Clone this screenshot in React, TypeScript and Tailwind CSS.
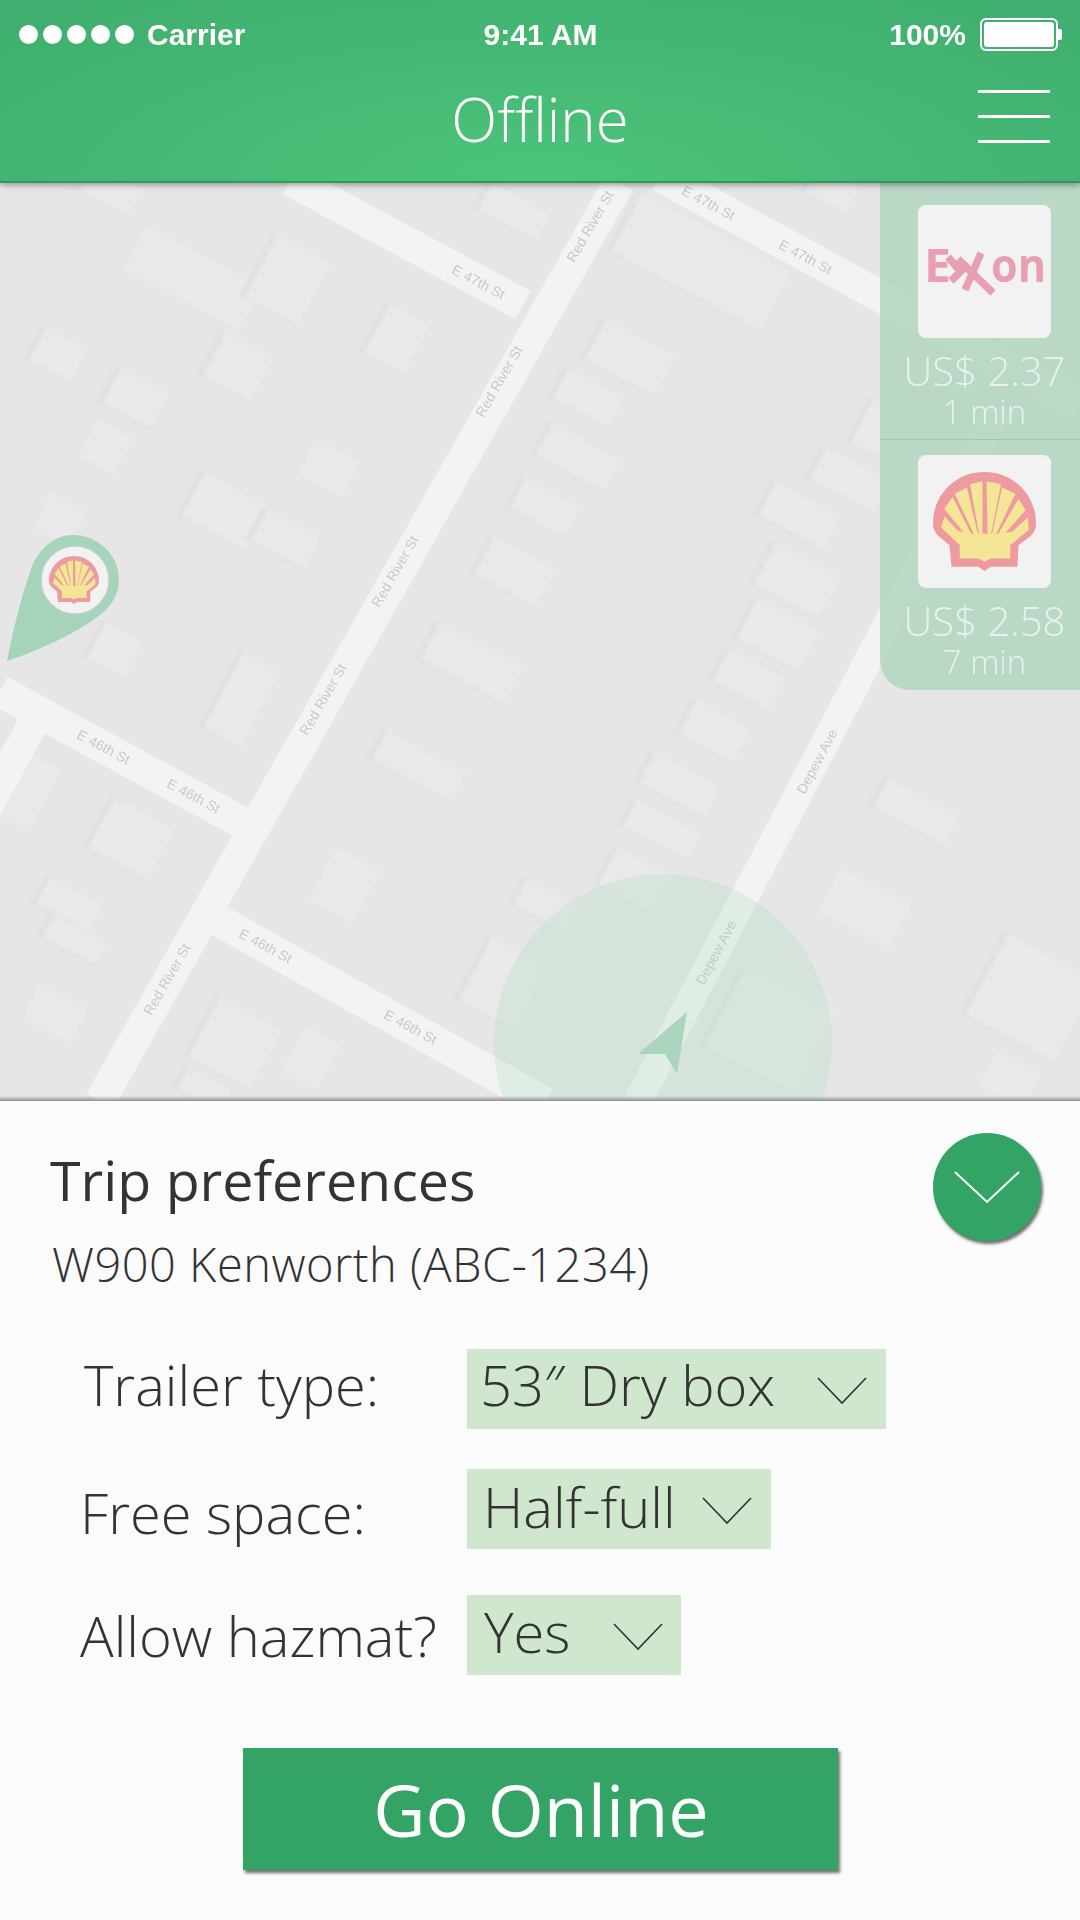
import React from 'react';

const sans = "font-['Open_Sans',sans-serif]";

// [cx, cy, w, h, hasEdge]
const buildings: [number, number, number, number, number][] = [
    [193, 278, 130, 49, 0], [288, 280, 60, 70, 1], [397, 339, 45, 55, 1], [238, 367, 54, 50, 1],
    [58, 355, 46, 37, 1], [136, 398, 54, 40, 1], [106, 447, 40, 42, 0], [329, 468, 50, 40, 0],
    [224, 511, 70, 50, 1], [60, 520, 40, 40, 0], [286, 539, 60, 35, 1], [110, 190, 55, 30, 1],
    [630, 358, 78, 45, 1], [588, 398, 62, 34, 1], [578, 458, 77, 35, 1], [545, 508, 62, 34, 1],
    [515, 572, 69, 43, 1], [701, 262, 168, 66, 1], [514, 212, 66, 30, 1], [832, 190, 45, 30, 1],
    [880, 430, 40, 50, 1], [850, 480, 72, 36, 1], [800, 516, 74, 38, 1], [797, 581, 73, 48, 1],
    [778, 635, 70, 45, 1], [472, 663, 94, 41, 1], [419, 766, 90, 32, 1], [345, 885, 50, 60, 0],
    [749, 680, 63, 36, 1], [715, 732, 62, 38, 1], [680, 785, 74, 35, 1], [662, 830, 72, 30, 1],
    [635, 880, 60, 42, 1], [545, 905, 55, 30, 1], [916, 812, 80, 33, 1], [865, 908, 80, 50, 0],
    [1031, 998, 100, 92, 1], [1010, 1080, 50, 40, 0], [770, 1030, 100, 90, 1], [242, 700, 42, 85, 1],
    [115, 650, 42, 40, 1], [131, 839, 67, 57, 1], [70, 905, 60, 30, 1], [75, 940, 60, 25, 1],
    [55, 1014, 55, 40, 0], [235, 1044, 70, 68, 1], [311, 1058, 40, 52, 0], [205, 1090, 50, 25, 1],
    [502, 983, 60, 70, 1], [25, 790, 45, 70, 0],
];

// [x, y, angle, text]
const labels: [number, number, number, string][] = [
    [478, 283, 28, 'E 47th St'], [708, 204, 28, 'E 47th St'], [805, 258, 28, 'E 47th St'],
    [591, 227, -60, 'Red River St'], [500, 382, -60, 'Red River St'], [396, 572, -60, 'Red River St'],
    [324, 700, -60, 'Red River St'], [168, 980, -60, 'Red River St'],
    [103, 748, 28, 'E 46th St'], [193, 797, 28, 'E 46th St'], [265, 947, 28, 'E 46th St'], [410, 1028, 28, 'E 46th St'],
    [818, 762, -62, 'Depew Ave'], [717, 953, -62, 'Depew Ave'],
];

const shellPetals = [
    '36,12 48,9 48,62 45,62', '52,9 66,12 56,62 53,62', '21,21 33,15 44,62 41,63', '67,15 80,21 60,63 57,62',
    '11,36 19,24 39,64 36,66', '83,26 90,37 64,66 61,64', '8,54 11,43 34,68 30,70', '92,44 93,56 70,70 66,68',
];

const ShellLogo = ({x, y, size}: { x: number; y: number; size: number }) => (
    <svg x={x} y={y} width={size} height={size * 0.96} viewBox="0 0 100 96" className="block">
        <path
            d="M50 0C78 0 100 22 100 50C100 55 98 59 95 62L83 71L82 92L56 92L50 96L44 92L18 92L16 71L5 62C2 59 0 55 0 50C0 22 22 0 50 0Z"
            fill="#ee9aa1"/>
        <path d="M8 54L26 71L26 84L44 84L50 87L56 84L75 84L75 71L93 56L62 60L38 60Z" fill="#f5e596"/>
        {shellPetals.map((points) => <polygon key={points} points={points} fill="#f5e596"/>)}
    </svg>
);

const ExxonLogo = () => (
    <svg width="133" height="133" viewBox="0 0 133 133" className="block">
        <g fill="#e89fb2" fontFamily="'Open Sans',sans-serif" fontWeight="700">
            <text x="6" y="76.5" fontSize="46" textLength="27" lengthAdjust="spacingAndGlyphs">E</text>
            <text x="73" y="76.5" fontSize="46" textLength="55" lengthAdjust="spacingAndGlyphs">on</text>
        </g>
        <g stroke="#e89fb2" strokeWidth="7.5" fill="none">
            <path d="M33 76L50 59"/>
            <path d="M47 85L63 48"/>
            <path d="M30 52L43 67"/>
            <path d="M40 54L75 88"/>
        </g>
    </svg>
);

const MapCanvas = () => (
    <svg width="1080" height="918" viewBox="0 183 1080 918" className="block absolute inset-0">
        <rect x="0" y="183" width="1080" height="918" fill="#e6e6e6"/>
        <g className="blur-[1px]">
            {buildings.map(([cx, cy, w, h, edge], i) => (
                <g key={i} transform={`rotate(28 ${cx} ${cy})`}>
                    <rect x={cx - w / 2} y={cy - h / 2} width={w} height={h} fill="#e9e9e9"/>
                    {edge ? <rect x={cx - w / 2 - 6} y={cy - h / 2} width={6} height={h} fill="#e1e1e1"/> : null}
                    {edge ? <rect x={cx - w / 2 - 6} y={cy + h / 2} width={w + 6} height={1.5} fill="#dedede"/> : null}
                </g>
            ))}
        </g>
        <g stroke="#f3f3f3" fill="none">
            <path d="M290 180L523 305" strokeWidth="32"/>
            <path d="M660 176L1080 405" strokeWidth="32"/>
            <path d="M0 691L250 827" strokeWidth="32"/>
            <path d="M200 910L545 1103" strokeWidth="32"/>
            <path d="M35 720L-25 830" strokeWidth="30"/>
            <path d="M619 183L100 1101" strokeWidth="31"/>
            <path d="M1000 408L638 1101" strokeWidth="28"/>
        </g>
        {labels.map(([x, y, angle, text], i) => (
            <text key={i} x={x} y={y} transform={`rotate(${angle} ${x} ${y})`} textAnchor="middle"
                  dominantBaseline="middle" fontSize="14" fill="#c8c8c8" fontFamily="'Liberation Sans',sans-serif">
                {text}
            </text>
        ))}
        <circle cx="663" cy="1043" r="169" fill="#a8dcb8" fillOpacity="0.25"/>
        <path d="M687 1012L638 1054L665 1054L677 1074Z" fill="#a9d4bd"/>
        <path
            d="M7 661C14 625 22 595 32 566C40 548 55 535 73 535C98 535 119 555 119 580C119 595 110 608 100 615C75 634 40 650 7 661Z"
            fill="#a5d4bb"/>
        <circle cx="75" cy="580" r="34" fill="#f2f2f2" stroke="#c4cfc9" strokeWidth="1.5"/>
        <ShellLogo x={49} y={556} size={50}/>
    </svg>
);

const StationCard = ({price, time, logo, last}: { price: string; time: string; logo: React.ReactNode; last?: boolean }) => (
    <div className={`flex flex-col items-center pl-[9px] ${last ? 'h-[250px] pt-[15px]' : 'h-[257px] pt-[22px] border-b border-[#a3c5b1]'}`}>
        <div className="w-[133px] h-[133px] bg-[#f2f2f2] rounded-[8px] flex items-center justify-center">{logo}</div>
        <div className={`${sans} font-light text-[40px] leading-[46px] mt-[10px] text-[#e8f2ec] whitespace-nowrap`}>{price}</div>
        <div className={`${sans} font-light text-[33px] leading-[36px] text-[#e8f2ec] whitespace-nowrap`}>{time}</div>
    </div>
);

const Chevron = ({w = 50, h = 26, stroke = '#333333', sw = 1.6}: { w?: number; h?: number; stroke?: string; sw?: number }) => (
    <svg width={w} height={h + 2} viewBox={`0 0 ${w} ${h + 2}`} className="block shrink-0">
        <path d={`M1 1L${w / 2} ${h}L${w - 1} 1`} fill="none" stroke={stroke} strokeWidth={sw}/>
    </svg>
);

const SelectRow = ({label, value, labelClass, boxClass, valueClass, rowClass}: {
    label: string; value: string; labelClass: string; boxClass: string; valueClass: string; rowClass: string;
}) => (
    <div className={`flex items-start ${rowClass}`}>
        <div className={`${sans} font-light text-[56px] leading-[80px] text-[#333] whitespace-nowrap ${labelClass}`}>{label}</div>
        <div className={`h-[80px] bg-[#cfe7cd] flex items-center ${boxClass}`}>
            <span className={`${sans} font-light text-[56px] leading-[80px] text-[#333] whitespace-nowrap ${valueClass}`}>{value}</span>
            <span className="mt-[4px]"><Chevron/></span>
        </div>
    </div>
);

export default function App() {
    return (
        <div className="w-[1080px] h-[1920px] overflow-hidden flex flex-col bg-[#fbfbfb]">
            <header
                className="relative z-10 h-[183px] shrink-0 border-b-2 border-[#2f9a5b] shadow-[0_2px_6px_rgba(0,0,0,0.35)] bg-[radial-gradient(ellipse_70%_130%_at_50%_100%,#4cc47a_0%,#3fae6e_100%)] text-white">
                <div className="h-[69px] pb-[1px] grid grid-cols-3 items-center pl-[19px] pr-[18px] font-['Liberation_Sans',sans-serif] font-bold text-[30px]">
                    <div className="flex items-center gap-[13px]">
                        <div className="flex gap-[5px]">
                            <span className="w-[19px] h-[19px] rounded-full bg-white"/>
                            <span className="w-[19px] h-[19px] rounded-full bg-white"/>
                            <span className="w-[19px] h-[19px] rounded-full bg-white"/>
                            <span className="w-[19px] h-[19px] rounded-full bg-white"/>
                            <span className="w-[19px] h-[19px] rounded-full bg-white"/>
                        </div>
                        <span>Carrier</span>
                    </div>
                    <div className="text-center">9:41 AM</div>
                    <div className="flex items-center justify-end gap-[14px]">
                        <span>100%</span>
                        <div className="flex items-center">
                            <div className="w-[78px] h-[33px] border-2 border-white rounded-[6px] p-[2px]">
                                <div className="w-full h-full bg-white rounded-[3px]"/>
                            </div>
                            <div className="w-[4px] h-[11px] bg-white rounded-r-[2px]"/>
                        </div>
                    </div>
                </div>
                <div className="relative flex items-center justify-center h-[81px]">
                    <span className={`${sans} font-light text-[60px] leading-[80px] mt-[18px]`}>Offline</span>
                    <div className="absolute right-[30px] top-[21px] flex flex-col gap-[22px]">
                        <span className="block w-[72px] h-[3px] bg-white"/>
                        <span className="block w-[72px] h-[3px] bg-white"/>
                        <span className="block w-[72px] h-[3px] bg-white"/>
                    </div>
                </div>
            </header>

            <main className="relative h-[918px] shrink-0 overflow-hidden">
                <MapCanvas/>
                <div className="absolute top-0 right-0 w-[200px] h-[507px] bg-[#b4d6c2]/90 rounded-bl-[30px]">
                    <StationCard price="US$ 2.37" time="1 min" logo={<ExxonLogo/>}/>
                    <StationCard price="US$ 2.58" time="7 min" last logo={
                        <svg width="103" height="99" className="block"><ShellLogo x={0} y={0} size={103}/></svg>
                    }/>
                </div>
                <div className="absolute inset-x-0 bottom-0 h-[5px] bg-gradient-to-b from-transparent to-[#8f8f8f]"/>
            </main>

            <section className="flex-1 flex flex-col">
                <div className="flex justify-between items-start">
                    <div className="pl-[50px] pt-[44px]">
                        <h1 className={`${sans} font-normal text-[55.5px] leading-[70px] text-[#333]`}>Trip preferences</h1>
                        <p className={`${sans} font-light text-[47px] leading-[64px] text-[#333] mt-[17px] ml-[2px] tracking-[0.5px]`}>W900 Kenworth (ABC-1234)</p>
                    </div>
                    <button className="mt-[32px] mr-[39px] w-[108px] h-[108px] rounded-full bg-[#33a465] shadow-[2px_3px_3px_rgba(0,0,0,0.55)] flex items-center justify-center">
                        <Chevron w={66} h={31} stroke="#ffffff" sw={2}/>
                    </button>
                </div>
                <div className="flex flex-col mt-[53px]">
                    <SelectRow rowClass="" label="Trailer type:" labelClass="pl-[84px] w-[467px] -mt-[5px]" boxClass="w-[419px] pl-[13px]"
                               value={'53\u2033 Dry box'} valueClass="w-[337px] pb-[10px]"/>
                    <SelectRow rowClass="mt-[40px]" label="Free space:" labelClass="pl-[80px] w-[467px] pt-[3px]" boxClass="w-[304px] pl-[16px]"
                               value="Half-full" valueClass="w-[219px] pb-[6px]"/>
                    <SelectRow rowClass="mt-[43px]" label="Allow hazmat?" labelClass="pl-[80px] w-[467px]" boxClass="w-[214px] pl-[17px]"
                               value="Yes" valueClass="w-[129px] pb-[8px]"/>
                </div>
                <div className="flex justify-center mt-[73px]">
                    <button className={`${sans} font-normal w-[595px] h-[122px] pl-[2px] bg-[#33a465] text-white text-[72px] leading-[122px] shadow-[2px_3px_3px_rgba(0,0,0,0.55)]`}>
                        Go Online
                    </button>
                </div>
            </section>
        </div>
    );
}
